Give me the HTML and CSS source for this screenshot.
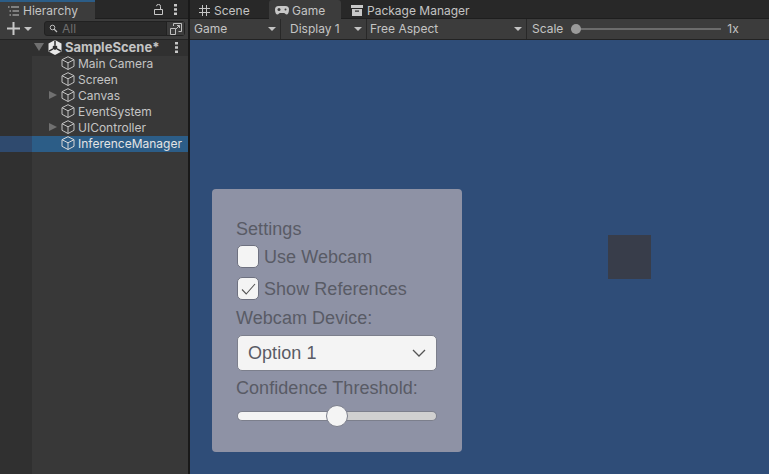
FILE: index.html
```html
<!doctype html>
<html lang="en">
<head>
	<meta charset="UTF-8">
	<title>Game view</title>
	<link rel="stylesheet" href="styles.css">
</head>
<body>
	<div class="app">
		<!-- hierarchy panel -->
		<aside class="hierarchy">
			<div class="tabbar">
				<div class="tab tab-hier">
					<svg class="ico" width="12" height="10" viewBox="0 0 12 10"><path d="M0 1h1.500M3 1h8M1.500 5h1.500M4.500 5h6.500M1.500 9h1.500M4.500 9h6.500" stroke="#c4c4c4" fill="none"/></svg>
					<span>Hierarchy</span>
				</div>
				<div class="tab-tools">
					<svg width="9" height="11" viewBox="0 0 9 11"><path d="M.5 5.500h8v5h-8zM6.500 5.500V2.500a2 2 0 0 0-4-.3" stroke="#c8c8c8" fill="none"/></svg>
					<svg width="3" height="11" viewBox="0 0 3 11"><path d="M0 0h3v2.500h-3zM0 4.200h3v2.500h-3zM0 8.500h3v2.500h-3z" fill="#c8c8c8"/></svg>
				</div>
			</div>
			<div class="hier-tools">
				<svg width="13" height="13" viewBox="0 0 13 13"><path d="M5.500 0h2v5.500h5.500v2h-5.500v5.500h-2v-5.500h-5.500v-2h5.500z" fill="#c8c8c8"/></svg>
				<i class="caret"></i>
				<div class="search">
					<svg width="10" height="9" viewBox="0 0 10 9"><circle cx="3.500" cy="3.500" r="2.300" stroke="#bdbdbd" fill="none"/><path d="M5 5l3 3" stroke="#bdbdbd" stroke-width="1.300"/></svg>
					<span>All</span>
					<div class="search-btn">
						<svg width="12" height="12" viewBox="0 0 12 12"><path d="M.5 5.500h5v6h-5zM3.500 3v-2.500h8v8h-3M6 6l3.500-3.500M7 2.500h2.500v2.500" stroke="#c0c0c0" fill="none"/></svg>
					</div>
				</div>
			</div>
			<div class="scene-row">
				<i class="arrow-down"></i>
				<svg class="unity" width="14" height="15" viewBox="0 0 14 15"><path d="M7 0l6.500 3.500v8L7 15 .5 11.500v-8z" fill="#e8e8e8"/><path d="M7 .5v4.500M1 11.200l4-2.400M13 11.200l-4-2.400" stroke="#2e2e2e" stroke-width="1.500"/><path d="M7 5l2.200 1.300v2.500L7 10 4.800 8.800V6.300z" fill="#2e2e2e"/></svg>
				<span class="scene-name">SampleScene*</span>
				<svg class="scene-more" width="3" height="11" viewBox="0 0 3 11"><path d="M0 0h3v2.500h-3zM0 4.200h3v2.500h-3zM0 8.500h3v2.500h-3z" fill="#c8c8c8"/></svg>
			</div>
			<ul class="tree">
				<li class="node"><span class="cube"><svg width="14" height="14" viewBox="0 0 14 14"><path d="M7 .7l6 3v6.600l-6 3.200-6-3.200v-6.600zM1 3.700l6 3.100 6-3.100M7 6.800v6.700" stroke="#c2c2c2" fill="none"/></svg></span>Main Camera</li>
				<li class="node"><span class="cube"><svg width="14" height="14" viewBox="0 0 14 14"><path d="M7 .7l6 3v6.600l-6 3.200-6-3.200v-6.600zM1 3.700l6 3.100 6-3.100M7 6.800v6.700" stroke="#c2c2c2" fill="none"/></svg></span>Screen</li>
				<li class="node has-kids"><span class="cube"><svg width="14" height="14" viewBox="0 0 14 14"><path d="M7 .7l6 3v6.600l-6 3.200-6-3.200v-6.600zM1 3.700l6 3.100 6-3.100M7 6.800v6.700" stroke="#c2c2c2" fill="none"/></svg></span>Canvas</li>
				<li class="node"><span class="cube"><svg width="14" height="14" viewBox="0 0 14 14"><path d="M7 .7l6 3v6.600l-6 3.200-6-3.200v-6.600zM1 3.700l6 3.100 6-3.100M7 6.800v6.700" stroke="#c2c2c2" fill="none"/></svg></span>EventSystem</li>
				<li class="node has-kids"><span class="cube"><svg width="14" height="14" viewBox="0 0 14 14"><path d="M7 .7l6 3v6.600l-6 3.200-6-3.200v-6.600zM1 3.700l6 3.100 6-3.100M7 6.800v6.700" stroke="#c2c2c2" fill="none"/></svg></span>UIController</li>
				<li class="node selected"><span class="cube"><svg width="14" height="14" viewBox="0 0 14 14"><path d="M7 .7l6 3v6.600l-6 3.200-6-3.200v-6.600zM1 3.700l6 3.100 6-3.100M7 6.800v6.700" stroke="#d8d8d8" fill="none"/></svg></span>InferenceManager</li>
			</ul>
		</aside>

		<!-- game panel -->
		<main class="game">
			<div class="tabbar">
				<div class="tab tab-scene">
					<svg width="11" height="11" viewBox="0 0 11 11"><path d="M3.500 0v11M7.500 0v11M0 3.500h11M0 7.500h11" stroke="#c4c4c4" fill="none"/></svg>
					<span>Scene</span>
				</div>
				<div class="tab tab-game">
					<svg width="14" height="9" viewBox="0 0 14 9"><path d="M3.500 0h7a3.500 3.500 0 0 1 3.500 3.500c0 3-1 5-2.500 5-1 0-1.500-1.500-2.500-1.500h-4c-1 0-1.500 1.500-2.500 1.500-1.500 0-2.500-2-2.500-5A3.500 3.500 0 0 1 3.500 0z" fill="#c8c8c8"/><circle cx="4" cy="3.500" r="1.500" fill="#3c3c3c"/><circle cx="10.500" cy="3.500" r="1" fill="#3c3c3c"/></svg>
					<span>Game</span>
				</div>
				<div class="tab tab-pack">
					<svg width="12" height="11" viewBox="0 0 12 11"><path d="M0 0h12v3h-12zM1 4h10v7h-10z" fill="#c8c8c8"/><path d="M4 5.500h4v1.200h-4z" fill="#282828"/></svg>
					<span>Package Manager</span>
				</div>
			</div>
			<div class="game-tools">
				<div class="drop drop-game">Game<i class="caret"></i></div>
				<div class="drop drop-display">Display 1<i class="caret"></i></div>
				<div class="drop drop-aspect">Free Aspect<i class="caret"></i></div>
				<div class="scale">
					<span>Scale</span>
					<div class="scale-track"><i class="scale-knob"></i></div>
					<span class="scale-val">1x</span>
				</div>
			</div>
			<div class="canvas">
				<div class="square"></div>
				<div class="settings">
					<div class="lbl">Settings</div>
					<div class="toggle toggle-first"><span class="box"></span>Use Webcam</div>
					<div class="toggle"><span class="box"><svg width="15" height="12" viewBox="0 0 15 12"><path d="M1 6.500l4.200 4.500L14 1" stroke="#555" stroke-width="1.100" fill="none"/></svg></span>Show References</div>
					<div class="lbl lbl-device">Webcam Device:</div>
					<div class="select">Option 1
						<svg width="14" height="8" viewBox="0 0 14 8"><path d="M1 1l6 6 6-6" stroke="#555" stroke-width="1.300" fill="none"/></svg>
					</div>
					<div class="lbl lbl-conf">Confidence Threshold:</div>
					<div class="slider">
						<div class="slider-fill"></div>
						<div class="slider-rest"></div>
						<div class="slider-knob"></div>
					</div>
				</div>
			</div>
		</main>
	</div>
</body>
</html>
```

FILE: styles.css
```css
html, body {height: 100%; margin: 0; overflow: hidden; font-family: Inter, "Noto Sans", sans-serif; font-size: 12px; color: #c4c4c4;}

.app {
	display: flex;
	width: 769px; height: 474px;
	background: #191919;
}

/* tabs */
.tabbar {
	display: flex;
	height: 19px;
	background: #282828;
	border-bottom: 1px solid #1e1e1e;
	box-sizing: border-box;
}
.tab {
	display: flex; align-items: center;
	box-sizing: border-box;
	line-height: 16px;
	height: 19px;
	padding-top: 2px;
}
.tab-hier {
	width: 95px;
	padding-left: 8px; gap: 3px;
	padding-top: 0;
	background: #3c3c3c;
	border-top: 2px solid #2c5d87;
}
.tab-tools {
	display: flex; align-items: center; gap: 11px;
	margin-left: auto; padding-right: 11px;
}
.tab-scene {width: 79px; padding-left: 9px; gap: 4px;}
.tab-game {width: 72px; padding-left: 6px; gap: 3px; background: #3c3c3c; border-radius: 3px 3px 0 0;}
.tab-pack {padding-left: 10px; gap: 4px;}

/* hierarchy */
.hierarchy {
	width: 188px; flex: none;
	background: #383838;
	margin-right: 2px;
	display: flex; flex-direction: column;
}
.hier-tools {
	display: flex; align-items: center;
	height: 21px;
	padding: 0 0 1px 7px;
	background: #3c3c3c;
	box-sizing: border-box;
	border-bottom: 1px solid #232323;
}
.caret {
	display: block; flex: none;
	width: 0; height: 0;
	border-left: 4px solid transparent;
	border-right: 4px solid transparent;
	border-top: 4px solid #c4c4c4;
}
.hier-tools .caret {margin-left: 4px;}
.search {
	display: flex; align-items: center;
	width: 141px; height: 15px;
	margin-left: 12px;
	padding-left: 4px;
	box-sizing: border-box;
	background: #2a2a2a;
	border: 1px solid #212121;
	border-radius: 3px;
	color: #6e6e6e;
	gap: 3px;
}
.search-btn {
	display: flex; align-items: center; justify-content: center;
	margin-left: auto;
	width: 17px; height: 13px;
	background: #3c3c3c;
	border-left: 1px solid #212121;
}
.scene-row {
	display: flex; align-items: center;
	height: 16px;
	background: #303030;
	padding: 0 0 2px 34px;
	box-sizing: border-box;
	font-size: 13px;
	font-weight: 700;
}
.arrow-down {
	width: 0; height: 0;
	border-left: 5px solid transparent;
	border-right: 5px solid transparent;
	border-top: 8px solid #707070;
}
.unity {margin-left: 4px;}
.scene-name {margin-left: 3px;}
.scene-more {margin-left: auto; margin-right: 10px;}
.tree {
	flex: 1;
	margin: 0; padding: 0;
	list-style: none;
	background: linear-gradient(to right, #303030 32px, #383838 32px);
}
.node {
	display: flex; align-items: center;
	height: 16px;
	padding: 0 0 2px 61px;
	box-sizing: border-box;
	position: relative;
	white-space: nowrap;
}
.cube {display: flex; margin-right: 3px;}
.has-kids:before {
	content: "";
	position: absolute; left: 49px; top: 3px;
	border-top: 4px solid transparent;
	border-bottom: 4px solid transparent;
	border-left: 8px solid #707070;
}
.selected {
	background: linear-gradient(to right, #2f4a6e 32px, #2c5d87 32px);
	color: #e4e4e4;
}

/* game */
.game {
	flex: 1;
	display: flex; flex-direction: column;
}
.game-tools {
	display: flex;
	height: 21px;
	background: #3c3c3c;
	border-bottom: 1px solid #232323;
	box-sizing: border-box;
}
.drop {
	display: flex; align-items: center; justify-content: space-between;
	box-sizing: border-box;
	padding: 0 4px 1px 4px;
	border-right: 1px solid #282828;
}
.drop-game {width: 91px;}
.drop-display {width: 86px; padding-left: 9px;}
.drop-aspect {width: 160px; padding-left: 3px;}
.scale {
	display: flex; align-items: center;
	flex: 1;
	padding: 0 0 1px 5px;
}
.scale-track {
	width: 150px; height: 2px;
	margin-left: 8px;
	background: #6c6c6c;
	position: relative;
}
.scale-knob {
	position: absolute; left: 0; top: -4px;
	width: 10px; height: 10px;
	border-radius: 50%;
	background: #9a9a9a;
}
.scale-val {margin-left: 6px;}

.canvas {
	flex: 1;
	position: relative;
	background: #2f4d78;
	padding: 149px 0 0 22px;
}
.square {
	position: absolute;
	left: 418px; top: 195px;
	width: 43px; height: 44px;
	background: #383d4a;
}
.settings {
	width: 250px; height: 263px;
	box-sizing: border-box;
	padding: 30px 24px 0;
	background: #8e92a5;
	border-radius: 4px;
	font-family: "Liberation Sans", Arial, sans-serif;
	font-size: 18px;
	letter-spacing: .05px;
	color: #595b65;
}
.lbl {line-height: 20px;}
.toggle {
	display: flex; align-items: center;
	height: 23px;
	margin: 9px 0 0 1px;
	gap: 5px;
	line-height: 20px;
}
.toggle-first {margin-top: 6px;}
.box {
	display: flex; align-items: center; justify-content: center;
	width: 22px; height: 23px;
	box-sizing: border-box;
	background: #f4f4f4;
	border: 1px solid #6e7180;
	border-radius: 5px;
}
.lbl-device {margin-top: 8px;}
.select {
	display: flex; align-items: center; justify-content: space-between;
	width: 200px; height: 36px;
	margin: 7px 0 0 1px;
	padding: 0 10px;
	box-sizing: border-box;
	background: #f4f4f4;
	border: 1px solid #7c7f8c;
	border-radius: 5px;
}
.lbl-conf {margin-top: 7px;}
.slider {
	display: flex;
	position: relative;
	width: 200px; height: 10px;
	margin: 13px 0 0 1px;
}
.slider-fill {
	width: 100px;
	background: #f4f4f4;
	border: 1px solid #7c7f8c;
	border-right: 0;
	border-radius: 5px 0 0 5px;
	box-sizing: border-box;
}
.slider-rest {
	flex: 1;
	background: #d0d0d0;
	border: 1px solid #7c7f8c;
	border-left: 0;
	border-radius: 0 5px 5px 0;
	box-sizing: border-box;
}
.slider-knob {
	position: absolute;
	left: 89px; top: -6px;
	width: 22px; height: 22px;
	box-sizing: border-box;
	background: #f4f4f4;
	border: 1px solid #7c7f8c;
	border-radius: 50%;
}
```
